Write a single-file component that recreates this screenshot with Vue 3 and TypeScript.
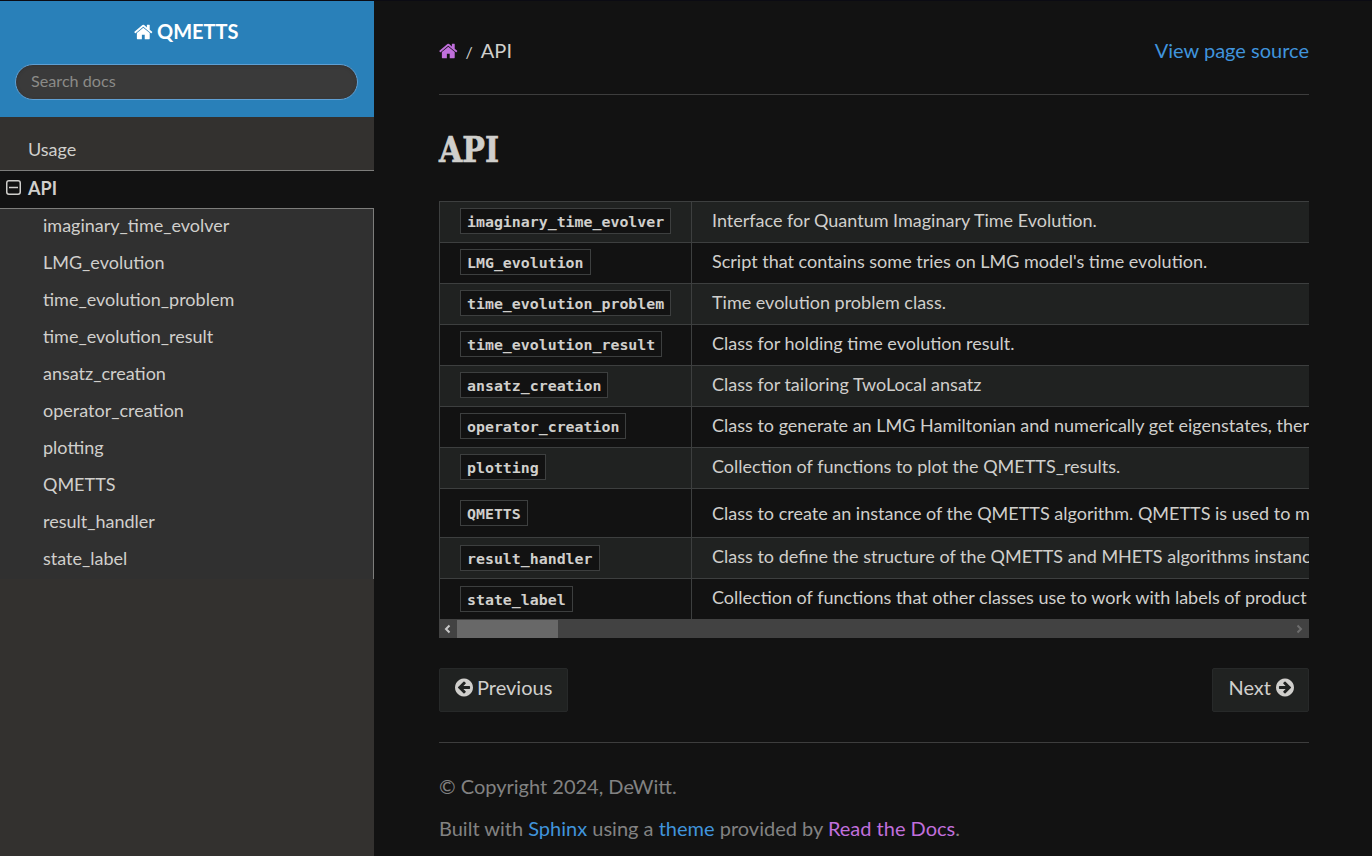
<script setup lang="ts">
interface ModuleRow {
  name: string
  text: string
  kind?: 'tall' | 'low'
}

const modules: ModuleRow[] = [
  { name: 'imaginary_time_evolver', text: 'Interface for Quantum Imaginary Time Evolution.' },
  { name: 'LMG_evolution', text: "Script that contains some tries on LMG model's time evolution." },
  { name: 'time_evolution_problem', text: 'Time evolution problem class.' },
  { name: 'time_evolution_result', text: 'Class for holding time evolution result.' },
  { name: 'ansatz_creation', text: 'Class for tailoring TwoLocal ansatz' },
  { name: 'operator_creation', text: 'Class to generate an LMG Hamiltonian and numerically get eigenstates, ther' },
  { name: 'plotting', text: 'Collection of functions to plot the QMETTS_results.' },
  { name: 'QMETTS', text: 'Class to create an instance of the QMETTS algorithm. QMETTS is used to m', kind: 'tall' },
  { name: 'result_handler', text: 'Class to define the structure of the QMETTS and MHETS algorithms instanc', kind: 'low' },
  { name: 'state_label', text: 'Collection of functions that other classes use to work with labels of product', kind: 'low' },
]

const homePath =
  'M1408 992v480q0 26-19 45t-45 19H960v-384H704v384H320q-26 0-45-19t-19-45V992q0-1 .5-3t.5-3l575-474 575 474q1 2 1 6zm223-69l-62 74q-8 9-21 11h-3q-13 0-21-7L832 424 140 1001q-12 8-24 7-13-2-21-11l-62-74q-8-10-7-23.5t11-21.5l719-599q32-26 76-26t76 26l244 204V288q0-14 9-23t23-9h192q14 0 23 9t9 23v408l219 182q10 8 11 21.5t-7 23.5z'
const arrowPath =
  'M1285 960V832q0-26-19-45t-45-19H714l189-189q19-19 19-45t-19-45l-91-91q-18-18-45-18t-45 18L360 760l-91 91q-18 18-18 45t18 45l91 91 362 362q18 18 45 18t45-18l91-91q18-18 18-45t-18-45l-189-189h507q26 0 45-19t19-45zm251-64q0 209-103 385.5T1153.5 1561 768 1664t-385.5-103T103 1281.5 0 896t103-385.5T382.5 231 768 128t385.5 103T1433 510.5 1536 896z'
</script>

<template>
  <div class="page">
    <nav class="side">
      <div class="side-head">
        <a class="brand">
          <svg class="home" viewBox="0 0 1664 1792"><path :d="homePath" /></svg>
          <span>QMETTS</span>
        </a>
        <input class="search" type="text" placeholder="Search docs" />
      </div>
      <div class="menu">
        <a class="top">Usage</a>
        <a class="top current">
          <svg class="toggle" viewBox="0 0 15 15">
            <rect x="0.75" y="0.75" width="13.5" height="13.5" rx="2.2" />
            <path d="M3 7.5h9" />
          </svg>
          API
        </a>
        <div class="sub">
          <a v-for="m in modules" :key="m.name">{{ m.name }}</a>
        </div>
      </div>
    </nav>

    <main class="content">
      <header class="crumbs">
        <div class="trail">
          <svg class="home visited" viewBox="0 0 1664 1792"><path :d="homePath" /></svg>
          <span class="slash">/</span>
          <span>API</span>
        </div>
        <a class="link">View page source</a>
      </header>

      <h1><span>API</span></h1>

      <div class="table">
        <div v-for="m in modules" :key="m.name" class="row" :class="m.kind">
          <div class="cell name"><code>{{ m.name }}</code></div>
          <div class="cell text">{{ m.text }}</div>
        </div>
      </div>
      <div class="scrollbar">
        <svg class="chev" viewBox="0 0 18 18"><path d="M10.5 5.500L7 9l3.500 3.500" /></svg>
        <div class="thumb"></div>
        <svg class="chev off" viewBox="0 0 18 18"><path d="M6.500 5.500L10 9l-3.500 3.500" /></svg>
      </div>

      <div class="pager">
        <a class="btn">
          <svg class="arrow" viewBox="0 0 1536 1792"><path :d="arrowPath" /></svg>
          <span>Previous</span>
        </a>
        <a class="btn next">
          <span>Next</span>
          <svg class="arrow flip" viewBox="0 0 1536 1792"><path :d="arrowPath" /></svg>
        </a>
      </div>

      <footer>
        <p>© Copyright 2024, DeWitt.</p>
        <p>
          Built with <a class="link">Sphinx</a> using a <a class="link">theme</a> provided by
          <a class="link visited">Read the Docs</a>.
        </p>
      </footer>
    </main>
  </div>
</template>

<style>
body {
  margin: 0;
  background: #121212;
}
</style>

<style scoped>
* {
  box-sizing: border-box;
}
.page {
  display: flex;
  height: 856px;
  overflow: hidden;
  border-top: 1px solid #0b0b13;
  background: #121212;
  color: #d0cfcc;
  font-family: Lato, 'Liberation Sans', sans-serif;
  font-size: 20px;
}
svg {
  fill: currentColor;
  flex: none;
}
.side {
  width: 374px;
  flex: none;
  background: #33312f;
}
.side-head {
  height: 116px;
  padding: 16px 16px 0 15px;
  background: #2980b9;
}
.brand {
  display: flex;
  justify-content: center;
  align-items: center;
  gap: 4px;
  height: 28px;
  color: #fff;
  font-weight: 700;
}
.brand .home {
  margin-top: 2px;
}
.home {
  width: 18.6px;
  height: 20px;
}
.search {
  display: block;
  width: 343px;
  height: 36px;
  margin: 19px 0 0;
  padding: 0 15px 3px;
  border: 1px solid #5f9fd3;
  border-radius: 50px;
  background: #3a3a3a;
  box-shadow: inset 0 1px 3px #333;
  color: #d0cfcc;
  font: 16.2px Lato, sans-serif;
}
.search::placeholder {
  color: #8b8b88;
}
.menu {
  padding-top: 16px;
  font-size: 18px;
}
.top {
  display: flex;
  align-items: center;
  height: 38px;
  padding: 0 0 5px 28px;
  border-bottom: 1px solid #7d7d7b;
}
.current {
  padding-left: 6px;
  padding-bottom: 4px;
  gap: 7px;
  background: #121212;
  font-weight: 700;
}
.toggle {
  width: 15px;
  height: 15px;
  fill: none;
  stroke: currentColor;
  stroke-width: 1.5;
}
.sub {
  border-right: 1px solid #7d7d7b;
  background: #303030;
}
.sub a {
  display: block;
  height: 37px;
  padding-left: 43px;
  line-height: 33px;
}
.content {
  width: 935px;
  padding: 35px 0 0 65px;
}
.crumbs {
  display: flex;
  justify-content: space-between;
  height: 59px;
  border-bottom: 1px solid #3d3d3d;
  line-height: 28px;
}
.trail {
  display: flex;
}
.trail .home {
  margin-top: 5px;
}
.slash {
  margin: 0 8px 0 8px;
  font-size: 16px;
  line-height: 31px;
}
.link {
  color: #4094dc;
}
.visited {
  color: #c06fdc;
}
h1 {
  height: 40px;
  margin: 35px 0 31px;
  font: 700 35px/40px 'DejaVu Serif', serif;
}
h1 span {
  display: inline-block;
  transform: scaleX(0.86);
  transform-origin: left;
  -webkit-text-stroke: 0.7px currentColor;
}
.table {
  overflow: hidden;
  border-left: 1px solid #3d3f3f;
  font-size: 18px;
  white-space: nowrap;
}
.row {
  display: flex;
  height: 41px;
  border-top: 1px solid #3d3f3f;
}
.row:nth-child(odd) {
  background: #202221;
}
.row.tall {
  height: 49px;
}
.cell {
  flex: none;
  line-height: 37px;
}
.name {
  width: 252px;
  padding: 6px 0 0 20px;
  border-right: 1px solid #3d3f3f;
}
.text {
  padding-left: 20px;
}
.low .name {
  padding-top: 7px;
}
.tall .name {
  padding-top: 11px;
}
.tall .text {
  line-height: 49px;
}
code {
  display: block;
  width: fit-content;
  height: 26px;
  padding: 1px 6px 0;
  border: 1px solid #3d3f3f;
  background: #121212;
  font: 700 14.9px/25px 'DejaVu Sans Mono', monospace;
}
.scrollbar {
  display: flex;
  align-items: center;
  height: 19px;
  background: #424242;
}
.thumb {
  width: 101px;
  height: 18px;
  margin-right: auto;
  background: #686868;
}
.chev {
  width: 18px;
  height: 18px;
  fill: none;
  stroke: #c8c8c8;
  stroke-width: 2;
}
.chev.off {
  stroke: #6d6d6d;
}
.pager {
  display: flex;
  justify-content: space-between;
  margin-top: 30px;
}
.btn {
  display: flex;
  gap: 4px;
  height: 44px;
  padding: 4px 15px 0 15px;
  border: 1px solid #272929;
  border-radius: 2px;
  background: #202221;
  line-height: 28px;
}
.next {
  gap: 5px;
  padding-right: 14px;
}
.arrow {
  width: 18px;
  height: 21px;
  margin-top: 4px;
}
.flip {
  transform: scaleX(-1);
}
footer {
  margin-top: 30px;
  padding-top: 28px;
  border-top: 1px solid #3d3d3d;
  color: #828282;
}
footer p {
  margin: 0 0 12px;
  line-height: 30px;
}
</style>
